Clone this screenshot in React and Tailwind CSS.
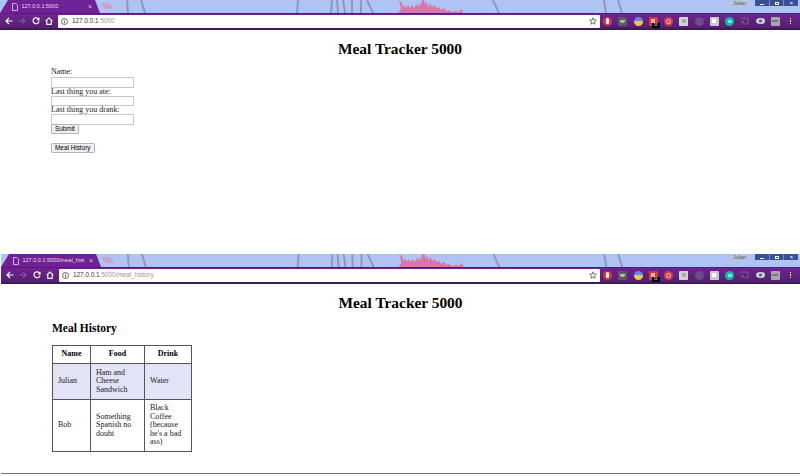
import React from "react";

const serif = "font-['Liberation_Serif','Times_New_Roman',serif]";
const sans = "font-['Liberation_Sans',Arial,sans-serif]";

function Wallpaper() {
  return (
    <svg className="absolute inset-0 h-full w-full" viewBox="0 0 800 13" preserveAspectRatio="none" fill="none">
      <path d="M100 3 L109 3 L114 9 L105 9 Z" fill="#c9a3cf" />
      <g stroke="#9597b8" strokeWidth="2">
        <path d="M127 0 L128 13" />
        <path d="M141 0 L145 13" />
        <path d="M298 0 L297 13" />
        <path d="M332 0 L331 13" />
        <path d="M337 0 L338 13" />
        <path d="M343 0 L345 13" />
        <path d="M352 0 L352 13" />
        <path d="M361 0 L361 13" />
        <path d="M367 0 L373 13" />
        <path d="M493 0 L499 13" />
        <path d="M604 0 L606 13" />
        <path d="M618 0 L622 13" />
      </g>
      <path d="M399 0 L402 3 L403 7 L405 5 L406 8 L408 5 L410 8 L412 5 L414 8 L417 4 L419 7 L420 2 L421 6 L422 0 L424 0 L425 4 L427 2 L428 7 L430 3 L432 7 L435 5 L436 8 L439 7 L441 10 L444 8 L446 11 L449 10 L451 12 L456 11 L458 12 L462 9 L463 13 L398 13 L401 9 Z" fill="#d977a9" />
    </svg>
  );
}

function ExtIcon({ bg, round = false, children }) {
  return (
    <span className={`flex h-[9px] w-[9px] shrink-0 items-center justify-center ${round ? "rounded-full" : "rounded-[1px]"}`} style={{ background: bg }}>
      {children}
    </span>
  );
}

function Extensions() {
  return (
    <div className="ml-[3.5px] flex shrink-0 items-center gap-[6.25px]">
      <ExtIcon bg="#d8363a" round><span className="h-[6px] w-[3px] rounded-full bg-white" /></ExtIcon>
      <ExtIcon bg="#5b5b5f"><span className="h-[3px] w-[5px] rounded-b-full bg-[#bbb]" /></ExtIcon>
      <ExtIcon bg="linear-gradient(#5b8fd0 45%, #f0c84a 45%)" round />
      <span className="relative">
        <ExtIcon bg="#d93a3a"><span className="h-[4px] w-[4px] bg-[#f3b0b0]" /></ExtIcon>
        <span className={`absolute left-[3px] top-[6px] flex h-[5px] w-[8px] items-center justify-center bg-black text-[4px] leading-none text-white ${sans}`}>11</span>
      </span>
      <ExtIcon bg="#d13f4b" round><span className="h-[5px] w-[5px] rounded-full border border-[#f3c1c1]" /></ExtIcon>
      <ExtIcon bg="#d4d4d4"><span className="h-[4px] w-[4px] bg-[#aaa]" /></ExtIcon>
      <ExtIcon bg="#6f4a8c" round />
      <ExtIcon bg="#c9c9c9"><span className="h-[4px] w-[4px] bg-white" /></ExtIcon>
      <ExtIcon bg="#14b5ad" round><span className="h-[3px] w-[4px] bg-[#7fe0d8]" /></ExtIcon>
      <svg width="9" height="8" viewBox="0 0 9 8" fill="none" stroke="#6f6a78" strokeWidth="1" className="shrink-0">
        <path d="M1 2 V1 H8 V7 H5 M1 4 A3 3 0 0 1 4 7 M1 6 A1 1 0 0 1 2 7" />
      </svg>
      <svg width="9" height="8" viewBox="0 0 9 8" className="shrink-0">
        <ellipse cx="4.5" cy="4" rx="4.5" ry="3" fill="#cfd4de" />
        <circle cx="4.5" cy="4" r="1.6" fill="#55607a" />
      </svg>
      <ExtIcon bg="#a8a4ac"><span className="h-[2px] w-[6px] bg-[#77727c]" /></ExtIcon>
      <span className="flex w-[9px] shrink-0 flex-col items-center gap-[1px]">
        <span className="h-[1.5px] w-[1.5px] bg-white" />
        <span className="h-[1.5px] w-[1.5px] bg-white" />
        <span className="h-[1.5px] w-[1.5px] bg-white" />
      </span>
    </div>
  );
}

function TabStrip({ title }) {
  return (
    <div className="relative h-[13px] overflow-hidden bg-[#afc3f5]">
      <Wallpaper />
      <div className="relative flex h-full items-end">
        <div className="flex h-[13px] w-[100px] items-center bg-[#6f2295] pl-[12px] pr-[8px] [clip-path:polygon(0_100%,8px_0,95px_0,100%_100%)]">
          <svg width="6" height="8" viewBox="0 0 6 8" fill="none" stroke="#e6d8ee" strokeWidth="0.8" className="shrink-0">
            <path d="M.5 .5 H3.8 L5.5 2.2 V7.5 H.5 Z" />
          </svg>
          <span className={`ml-[3.5px] min-w-0 flex-1 whitespace-nowrap text-[5.5px] leading-none text-[#eadff0] ${sans}`}>{title}</span>
          <span className={`text-[7px] leading-none text-[#d9c6e5] ${sans}`}>×</span>
        </div>
      </div>
      <div className={`absolute right-[52px] top-0 rounded-[1px] bg-[#b9c6dc] px-[2px] text-[5px] leading-[6px] text-[#555] ${sans}`}>Julian</div>
      <div className="absolute right-[2px] top-0 flex h-[6px] w-[43px] bg-[#3a4f9a]">
        <span className="flex flex-1 items-center justify-center"><span className="mt-[2px] h-[1px] w-[4px] bg-white" /></span>
        <span className="flex flex-1 items-center justify-center border-x border-[#7488c4]"><span className="h-[3px] w-[4px] border border-white" /></span>
        <span className={`flex-1 text-center text-[6px] leading-[6px] text-white ${sans}`}>×</span>
      </div>
    </div>
  );
}

function Toolbar({ host, path }) {
  return (
    <div className="flex h-[17px] items-center border-t border-b-2 border-t-[#690f86] border-b-[#3d1a55] bg-gradient-to-b from-[#6f2390] to-[#53206f] pl-[5px] pr-[5px]">
      <div className="flex w-[53px] shrink-0 items-center gap-[5.3px]">
        <svg width="8" height="8" viewBox="0 0 8 8" fill="none" stroke="#fff" strokeWidth="1.2"><path d="M7.5 4 H1 M4 1 L1 4 L4 7" /></svg>
        <svg width="8" height="8" viewBox="0 0 8 8" fill="none" stroke="#8d63a4" strokeWidth="1"><path d="M.5 4 H7 M4 1 L7 4 L4 7" /></svg>
        <svg width="8" height="8" viewBox="0 0 8 8" fill="none" stroke="#fff" strokeWidth="1.2"><path d="M6.8 2.5 A3 3 0 1 0 7 4.5 M7 .8 V3 H4.8" /></svg>
        <svg width="8" height="8" viewBox="0 0 8 8" fill="none" stroke="#fff" strokeWidth="1.1"><path d="M.6 4.2 L4 1 L7.4 4.2 M1.8 3.4 V7.4 H6.2 V3.4" /></svg>
      </div>
      <div className="flex h-[13px] min-w-0 flex-1 items-center rounded-[1px] bg-white pl-[3px] pr-[3px]">
        <svg width="7" height="7" viewBox="0 0 7 7" fill="none" stroke="#444" strokeWidth="0.8" className="shrink-0">
          <circle cx="3.5" cy="3.5" r="3" />
          <path d="M3.5 3 V5.3 M3.5 1.6 V2.4" />
        </svg>
        <span className={`ml-[4px] flex-1 whitespace-nowrap text-[6.4px] leading-none text-[#9a9a9a] ${sans}`}>
          <span className="text-[#333]">{host}</span>
          {path}
        </span>
        <svg width="8" height="8" viewBox="0 0 10 10" fill="none" stroke="#555" strokeWidth="1"><path d="M5 1 L6.2 3.8 L9.2 4 L6.9 6 L7.6 9 L5 7.4 L2.4 9 L3.1 6 L.8 4 L3.8 3.8 Z" /></svg>
      </div>
      <Extensions />
    </div>
  );
}

function Heading() {
  return <h1 className="text-center text-[15.4px] font-bold leading-[18px] text-black">Meal Tracker 5000</h1>;
}

const inputClass = "block h-[10.6px] w-[83px] border border-[#c8c8c8] bg-white";
const buttonClass = `block h-[10px] rounded-[1px] border border-[#b4b4b4] bg-[#efefef] px-[3px] text-[6.4px] leading-[8px] text-black ${sans}`;

function TrackerPage() {
  return (
    <div className={`h-[224px] bg-white pt-[10px] ${serif}`}>
      <Heading />
      <form className="ml-[51px] mt-[10px] text-[8px] leading-[8px] text-[#222]">
        <label className="block">Name:</label>
        <input className={`${inputClass} mt-[1px]`} />
        <label className="block">Last thing you ate:</label>
        <input className={inputClass} />
        <label className="block">Last thing you drank:</label>
        <input className={inputClass} />
        <button type="button" className={`${buttonClass} -mt-[1px]`}>Submit</button>
        <button type="button" className={`${buttonClass} mt-[9px]`}>Meal History</button>
      </form>
    </div>
  );
}

const rows = [
  { name: "Julian", food: "Ham and Cheese Sandwich", drink: "Water", shade: true },
  { name: "Bob", food: "Something Spanish no doubt", drink: "Black Coffee (because he's a bad ass)", shade: false },
];

function HistoryPage() {
  return (
    <div className={`h-[190px] border-b border-[#777] bg-white pt-[10px] ${serif}`}>
      <Heading />
      <div className="ml-[51px] mt-[9px]">
        <h2 className="text-[11.5px] font-bold leading-[14px] text-black">Meal History</h2>
        <table className="mt-[10px] w-[139px] table-fixed border-collapse text-[8px] leading-[8.5px] text-[#222]">
          <colgroup>
            <col className="w-[38px]" />
            <col className="w-[54px]" />
            <col className="w-[47px]" />
          </colgroup>
          <thead>
            <tr className="h-[18px]">
              <th className="border border-[#555] text-black">Name</th>
              <th className="border border-[#555] text-black">Food</th>
              <th className="border border-[#555] text-black">Drink</th>
            </tr>
          </thead>
          <tbody>
            {rows.map((r) => (
              <tr key={r.name} className={r.shade ? "bg-[#e3e3f7]" : "bg-white"}>
                <td className="border border-[#555] px-[5px] py-[4.5px]">{r.name}</td>
                <td className="border border-[#555] px-[5px] py-[4.5px]">{r.food}</td>
                <td className="border border-[#555] px-[5px] py-[4.5px]">{r.drink}</td>
              </tr>
            ))}
          </tbody>
        </table>
      </div>
    </div>
  );
}

export default function App() {
  return (
    <div className="h-[476px] w-[800px] overflow-hidden bg-white">
      <TabStrip title="127.0.0.1:5000" />
      <Toolbar host="127.0.0.1" path=":5000" />
      <TrackerPage />
      <div className="pl-[1px]">
        <TabStrip title="127.0.0.1:5000/meal_hist" />
        <Toolbar host="127.0.0.1" path=":5000/meal_history" />
        <HistoryPage />
      </div>
    </div>
  );
}
